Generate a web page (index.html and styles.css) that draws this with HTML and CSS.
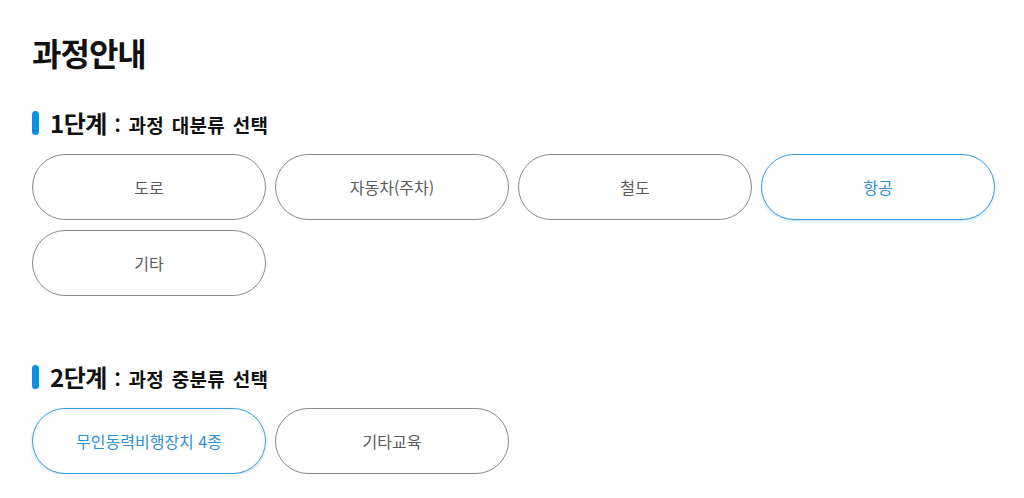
FILE: index.html
```html
<!DOCTYPE html>
<html lang="ko">
<head>
  <meta charset="UTF-8">
  <meta name="viewport" content="width=device-width, initial-scale=1.0">
  <title>과정안내</title>
  <link rel="stylesheet" href="styles.css">
</head>
<body>
  <div class="wrap">
    <h1 class="page-title">과정안내</h1>

    <div class="step">
      <h2 class="step-title"><span class="step-no">1단계</span> : 과정 대분류 선택</h2>
      <div class="choice-list">
        <button class="choice">도로</button>
        <button class="choice">자동차(주차)</button>
        <button class="choice">철도</button>
        <button class="choice active">항공</button>
        <button class="choice">기타</button>
      </div>
    </div>

    <div class="step">
      <h2 class="step-title"><span class="step-no">2단계</span> : 과정 중분류 선택</h2>
      <div class="choice-list">
        <button class="choice active">무인동력비행장치 4종</button>
        <button class="choice">기타교육</button>
      </div>
    </div>
  </div>
</body>
</html>
```

FILE: styles.css
```css
body {
  margin: 0;
  padding: 0;
  background: #fff;
  color: #111;
  font-family: "Noto Sans CJK KR", "Noto Sans", sans-serif;
}

.wrap {
  padding: 28px 32px 0 32px;
}

.page-title {
  margin: 0 0 32px 0;
  font-size: 32px;
  font-weight: 700;
  line-height: 48px;
  letter-spacing: -1px;
}

.step {
  margin-bottom: 66px;
}

.step:last-child {
  margin-bottom: 0;
}

.step-title {
  position: relative;
  margin: 0 0 14px 0;
  padding-left: 18px;
  font-size: 19px;
  font-weight: 700;
  line-height: 30px;
  letter-spacing: 0.3px;
  word-spacing: 2px;
}

.step-title::before {
  content: "";
  position: absolute;
  left: 0;
  top: 3px;
  width: 7px;
  height: 24px;
  border-radius: 4px;
  background: #0b8fe0;
}

.step-no {
  font-size: 24px;
  letter-spacing: -0.5px;
}

.choice-list {
  display: grid;
  grid-template-columns: repeat(4, 234px);
  column-gap: 9px;
  row-gap: 10px;
}

.choice {
  height: 66px;
  border: 1px solid #8a8a8a;
  border-radius: 33px;
  background: #fff;
  color: #5a5a5a;
  font-family: inherit;
  font-size: 16px;
  cursor: pointer;
}

.choice.active {
  border-color: #3a9ee0;
  color: #2e8fd4;
  box-shadow: 0 1px 3px rgba(58, 158, 224, 0.35);
}
```
